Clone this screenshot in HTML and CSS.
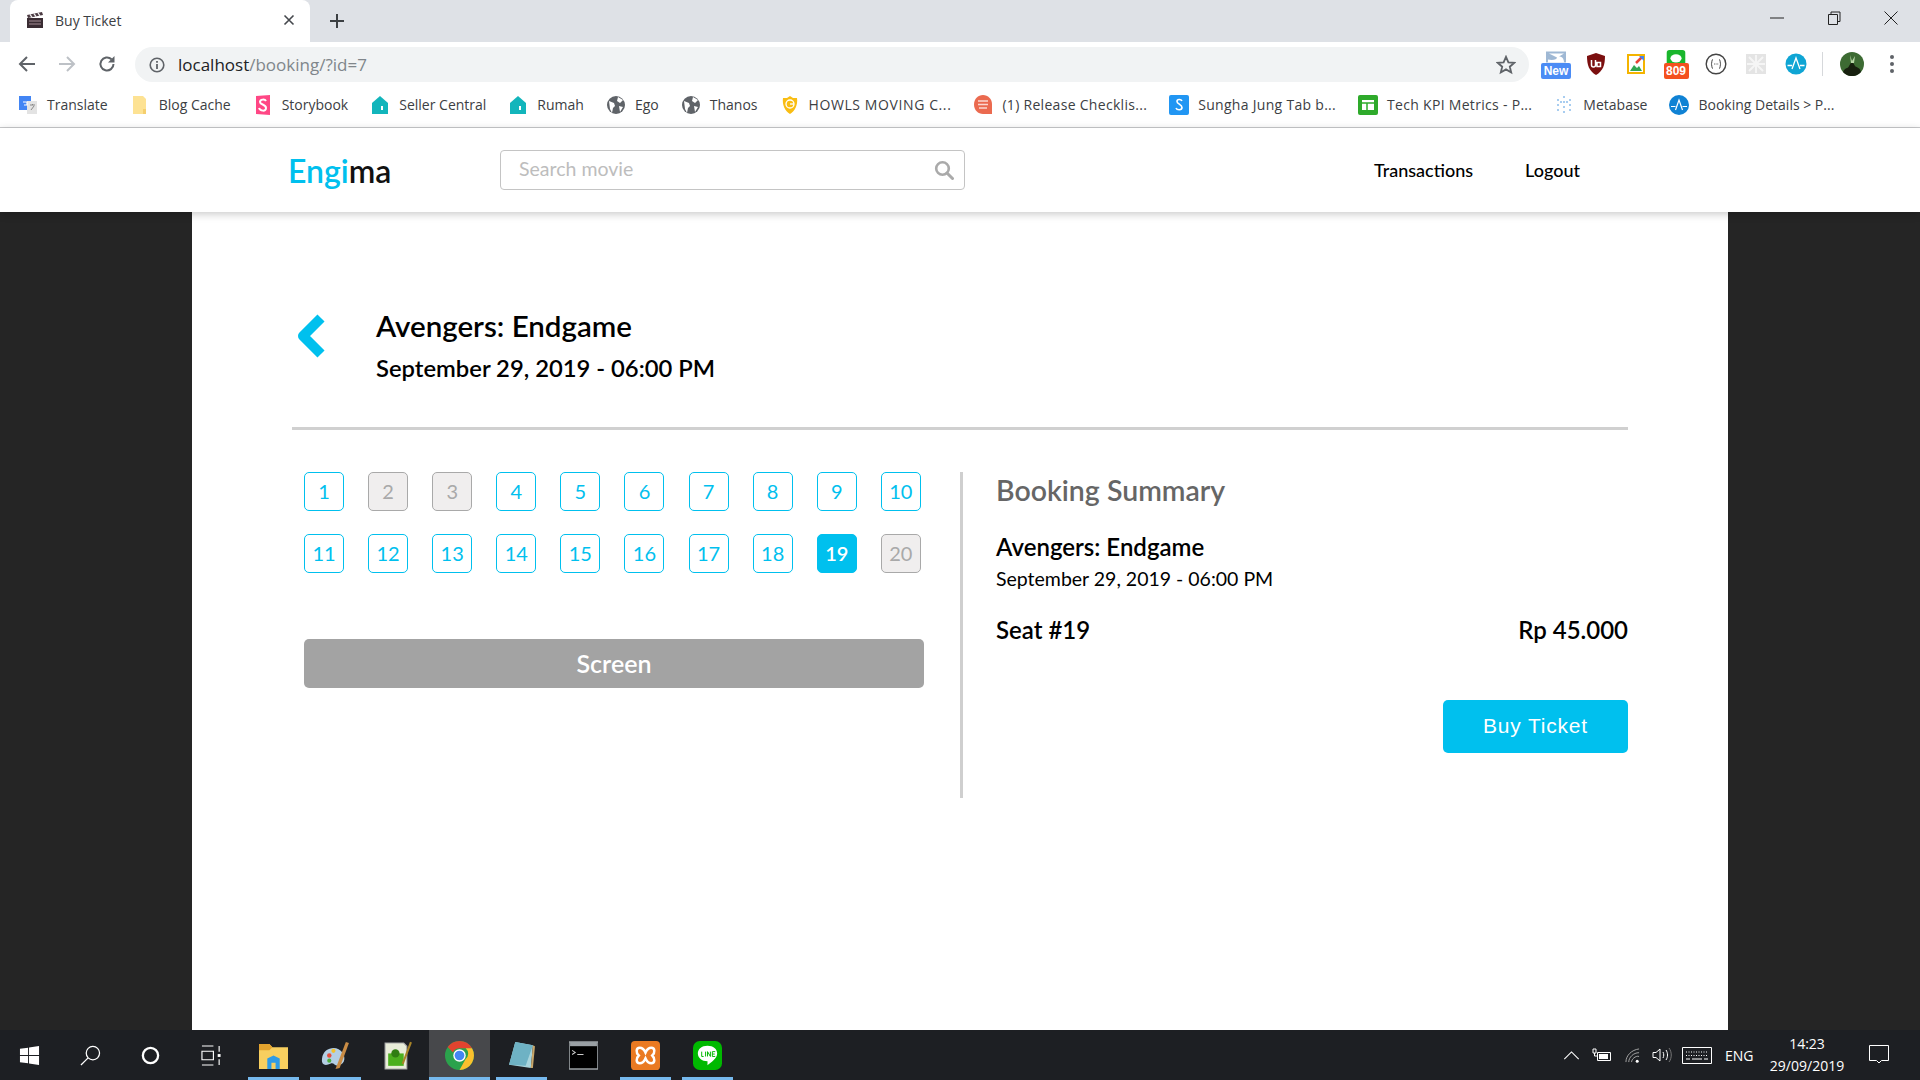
FILE: index.html
```html
<!DOCTYPE html>
<html>
<head>
    <title>Buy Ticket</title>
    <link rel="stylesheet" href="styles.css">
</head>
<body>
    <!-- browser tab strip -->
    <div class="tabstrip">
        <div class="tab">
            <svg class="favicon" viewBox="0 0 18 18"><path d="M1 7h16v10H1z" fill="#3a2c33"/><path d="M1 4l15-3 1 3L2 7z" fill="#4b3a42"/><path d="M4 3.4l2 3M8 2.6l2 3M12 1.8l2 3" stroke="#eee" stroke-width="1.3"/><path d="M3 10h12M3 13h12" stroke="#a58d96" stroke-width="1"/></svg>
            <span class="tab-title">Buy Ticket</span>
            <svg class="tab-close" viewBox="0 0 12 12"><path d="M1.5 1.5l9 9M10.5 1.5l-9 9" stroke="#45484d" stroke-width="1.6"/></svg>
        </div>
        <svg class="new-tab" viewBox="0 0 16 16"><path d="M8 1v14M1 8h14" stroke="#3c4043" stroke-width="2"/></svg>
        <div class="window-btns">
            <svg viewBox="0 0 14 14"><path d="M0 7h14" stroke="#222" stroke-width="1"/></svg>
            <svg viewBox="0 0 14 14"><path d="M1.5 3.5h9v10h-9zM4 3.5V1h9v9.5h-2.500" fill="none" stroke="#222" stroke-width="1"/></svg>
            <svg viewBox="0 0 14 14"><path d="M.5.5l13 13M13.500.5l-13 13" stroke="#222" stroke-width="1"/></svg>
        </div>
    </div>

    <!-- address bar -->
    <div class="toolbar">
        <div class="nav-btns">
            <svg viewBox="0 0 18 18"><path d="M17 9H2M9 2L2 9l7 7" fill="none" stroke="#5f6368" stroke-width="2"/></svg>
            <svg viewBox="0 0 18 18"><path d="M1 9h15M9 2l7 7-7 7" fill="none" stroke="#bdc1c6" stroke-width="2"/></svg>
            <svg viewBox="0 0 18 18"><path d="M15.500 9a6.500 6.500 0 1 1-2-4.700" fill="none" stroke="#5f6368" stroke-width="2"/><path d="M16.500 1v6.500H10z" fill="#5f6368"/></svg>
        </div>
        <div class="omnibox">
            <svg class="info" viewBox="0 0 16 16"><circle cx="8" cy="8" r="6.800" fill="none" stroke="#5f6368" stroke-width="1.600"/><path d="M8 7v5M8 4v1.800" stroke="#5f6368" stroke-width="1.800"/></svg>
            <span class="url">localhost<span class="url-path">/booking/?id=7</span></span>
            <svg class="star" viewBox="0 0 20 20"><path d="M10 1.800l2.400 5.500 6 .5-4.600 3.900 1.400 5.800L10 14.400l-5.200 3.100 1.400-5.800L1.600 7.800l6-.5z" fill="none" stroke="#5f6368" stroke-width="1.800"/></svg>
        </div>
        <div class="extensions">
            <div class="ext ext-new"><svg viewBox="0 0 22 12"><path d="M1 1h20v11H1z" fill="#9fb8d4"/><path d="M4 3h15l-5 3c3 0 5 2 5 6H3V9c5 1 9 0 9-2z" fill="#fff"/></svg><span class="ext-tag tag-new">New</span></div>
            <div class="ext"><svg viewBox="0 0 20 24" width="20" height="24"><path d="M10 1l9 3c0 9-2 15-9 19C3 19 1 13 1 4z" fill="#7b0f0f"/><path d="M5.500 8v5a2 2 0 0 0 4 0V8M11 10.500h3.500v4H11z" fill="none" stroke="#fff" stroke-width="1.500"/></svg></div>
            <div class="ext"><svg viewBox="0 0 18 20" width="18" height="20"><path d="M1 1h16v18H1z" fill="#fff" stroke="#f4b400" stroke-width="2"/><path d="M3 17l4-6 3 3 2-2 3 5z" fill="#34a853"/><path d="M9 9l6-6" stroke="#ea4335" stroke-width="2.500"/><path d="M12 2h5v5" fill="#4285f4"/></svg></div>
            <div class="ext ext-line"><svg viewBox="0 0 20 14"><path d="M3 0h14a3 3 0 0 1 3 3v11H0V3a3 3 0 0 1 3-3z" fill="#19b62c"/><ellipse cx="10" cy="9" rx="6" ry="4.500" fill="#fff"/></svg><span class="ext-tag tag-line">809</span></div>
            <div class="ext"><svg viewBox="0 0 22 22" width="22" height="22"><circle cx="11" cy="11" r="9.800" fill="#fff" stroke="#444" stroke-width="1.400"/><path d="M8 6.500c-2 0-.5 4.500-2 4.500 1.500 0 0 4.500 2 4.500M14 6.500c2 0 .5 4.500 2 4.500-1.500 0 0 4.500-2 4.500" fill="none" stroke="#444" stroke-width="1"/><path d="M9 11h.8M10.700 11h.8M12.400 11h.8" stroke="#444" stroke-width="1"/></svg></div>
            <div class="ext"><svg viewBox="0 0 20 20" width="20" height="20"><path d="M0 0h20v20H0z" fill="#e4e4e4"/><path d="M3 3l14 14M17 3L3 17M10 1v18M1 10h18" stroke="#f5f5f5" stroke-width="2"/></svg></div>
            <div class="ext"><svg viewBox="0 0 22 22" width="22" height="22"><circle cx="11" cy="11" r="10.500" fill="#0fa5d4"/><path d="M2.500 12.500H7M7 16l4-11 4 11M15 12.500h4.500" fill="none" stroke="#fff" stroke-width="1.300"/></svg></div>
            <span class="ext-sep"></span>
            <div class="ext ext-avatar"><svg viewBox="0 0 24 24" width="24" height="24"><circle cx="12" cy="12" r="12" fill="#3d6b33"/><path d="M3 20c2-5 5-3 6-6l3-5 3 5c2 2 5 1 6 6a12 12 0 0 1-18 0z" fill="#17200f"/><path d="M10 3l2 6 3-5-1 7h-3z" fill="#b9d7a8"/></svg></div>
            <div class="ext ext-menu"><span></span><span></span><span></span></div>
        </div>
    </div>

    <!-- bookmarks -->
    <div class="bookmarks">
        <div class="bm"><svg viewBox="0 0 20 20"><path d="M1 1h12v14H1z" fill="#4285f4"/><path d="M9 6h10v13H9z" fill="#e3e3e3"/><path d="M5 7h4v3H6" fill="none" stroke="#fff" stroke-width="1.200"/><path d="M12 10h5M14.500 9v1M13 15l3-4" stroke="#888" stroke-width="1"/></svg>Translate</div>
        <div class="bm"><svg viewBox="0 0 20 20"><path d="M3 1h10l3 3v15H3z" fill="#fde293"/><path d="M13 14h3v5h-3z" fill="#f5cf6e"/></svg>Blog Cache</div>
        <div class="bm"><svg viewBox="0 0 20 20"><path d="M3 1l14-1v20L3 19z" fill="#ff4785"/><path d="M13 6c-1-2-6-2-6 1s6 2 6 6-6 3-7 0" fill="none" stroke="#fff" stroke-width="2"/></svg>Storybook</div>
        <div class="bm"><svg viewBox="0 0 20 20"><path d="M10 1l8 7v11H2V8z" fill="#12b5bb"/><path d="M11 11h2v4h-2z" fill="#fff"/></svg>Seller Central</div>
        <div class="bm"><svg viewBox="0 0 20 20"><path d="M10 1l8 7v11H2V8z" fill="#12b5bb"/><path d="M11 11h2v4h-2z" fill="#fff"/></svg>Rumah</div>
        <div class="bm"><svg viewBox="0 0 20 20"><use href="#globe"/></svg>Ego</div>
        <div class="bm"><svg viewBox="0 0 20 20"><use href="#globe"/></svg>Thanos</div>
        <div class="bm bm-caps"><svg viewBox="0 0 20 20"><path d="M10 1l3 2h4c1 7-2 13-7 16C5 16 2 10 3 3h4z" fill="#f9bd13"/><circle cx="10" cy="9" r="4" fill="none" stroke="#fff" stroke-width="1.300"/><path d="M10 9h4" stroke="#fff" stroke-width="1.300"/></svg>HOWLS MOVING C...</div>
        <div class="bm bm-wide"><svg viewBox="0 0 20 20"><path d="M10 0c5 0 9 4 9 9v10H10c-5 0-9-4-9-9.500S5 0 10 0z" fill="#eb6a4f"/><path d="M5 6h10M5 9.500h10M6 13h8" stroke="#fbd9d1" stroke-width="1.500"/></svg>(1) Release Checklis...</div>
        <div class="bm bm-wide"><svg viewBox="0 0 20 20"><path d="M2 0h16a2 2 0 0 1 2 2v16a2 2 0 0 1-2 2H2a2 2 0 0 1-2-2V2a2 2 0 0 1 2-2z" fill="#2196f3"/><path d="M13 6c-1-2-5-2-5 .5s5 3 5 6-5 3-6 .5" fill="none" stroke="#fff" stroke-width="1.600"/></svg>Sungha Jung Tab b...</div>
        <div class="bm bm-wide"><svg viewBox="0 0 20 20"><path d="M2 0h16a2 2 0 0 1 2 2v16a2 2 0 0 1-2 2H2a2 2 0 0 1-2-2V2a2 2 0 0 1 2-2z" fill="#2eaa2b"/><path d="M4 5h12v10H4z" fill="#fff"/><path d="M4 8h12M9 8v7" stroke="#2eaa2b" stroke-width="1.500"/></svg>Tech KPI Metrics - P...</div>
        <div class="bm"><svg viewBox="0 0 20 20"><path d="M3 4h2v2H3zM3 9h2v2H3zM3 14h2v2H3zM9 1h2v2H9zM9 6h2v2H9zM9 11h2v2H9zM9 16h2v2H9zM15 4h2v2h-2zM15 9h2v2h-2zM15 14h2v2h-2zM6 6h2v2H6zM12 6h2v2h-2z" fill="#a8cdf0"/></svg>Metabase</div>
        <div class="bm"><svg viewBox="0 0 20 20"><circle cx="10" cy="10" r="10" fill="#0f82d4"/><path d="M2 11.500h4.500M6.500 15L10 5l3.500 10M13.500 11.500H18" fill="none" stroke="#fff" stroke-width="1.200"/></svg>Booking Details &gt; P...</div>
    </div>

    <svg class="defs"><defs><g id="globe"><circle cx="10" cy="10" r="9" fill="#5f6368"/><path d="M3 6l5 2 1 3-2 2-1 5-2-4zM12 2l5 3-3 3-3-2zM13 11l4 1-3 5z" fill="#fff"/></g></defs></svg>

    <!-- site header -->
    <header class="topnav">
        <div class="logo"><span class="logo-accent">Engi</span>ma</div>
        <div class="search">
            <span class="search-text">Search movie</span>
            <svg class="search-icon" viewBox="0 0 20 20"><circle cx="8.500" cy="8.500" r="6.300" fill="none" stroke="#aaa" stroke-width="2.600"/><path d="M13 13l5.500 5.500" stroke="#aaa" stroke-width="3" stroke-linecap="round"/></svg>
        </div>
        <nav class="menu">
            <a>Transactions</a>
            <a>Logout</a>
        </nav>
    </header>

    <main class="page">
        <div class="sheet">
            <div class="movie-head">
                <svg class="back" viewBox="0 0 30 46"><path d="M25 5L7 23l18 18" fill="none" stroke="#00c0ee" stroke-width="10" stroke-linejoin="round"/></svg>
                <div>
                    <h1 class="movie-title">Avengers: Endgame</h1>
                    <div class="movie-time">September 29, 2019 - 06:00 PM</div>
                </div>
            </div>

            <div class="booking">
                <div class="seat-col">
                    <div class="seats">
                        <div class="seat">1</div>
                        <div class="seat taken">2</div>
                        <div class="seat taken">3</div>
                        <div class="seat">4</div>
                        <div class="seat">5</div>
                        <div class="seat">6</div>
                        <div class="seat">7</div>
                        <div class="seat">8</div>
                        <div class="seat">9</div>
                        <div class="seat">10</div>
                        <div class="seat">11</div>
                        <div class="seat">12</div>
                        <div class="seat">13</div>
                        <div class="seat">14</div>
                        <div class="seat">15</div>
                        <div class="seat">16</div>
                        <div class="seat">17</div>
                        <div class="seat">18</div>
                        <div class="seat selected">19</div>
                        <div class="seat taken">20</div>
                    </div>
                    <div class="screen">Screen</div>
                </div>

                <div class="summary">
                    <h2 class="summary-title">Booking Summary</h2>
                    <div class="summary-movie">Avengers: Endgame</div>
                    <div class="summary-time">September 29, 2019 - 06:00 PM</div>
                    <div class="summary-row">
                        <span>Seat #19</span>
                        <span>Rp 45.000</span>
                    </div>
                    <button class="buy-btn">Buy Ticket</button>
                </div>
            </div>
        </div>
    </main>

    <!-- windows taskbar -->
    <footer class="taskbar">
        <div class="sys-btns">
            <svg viewBox="0 0 22 22"><path d="M1 4l8.500-1.200v7.700H1zM10.500 2.600L21 1v9.500H10.500zM1 11.500h8.500v7.700L1 18zM10.500 11.500H21V21l-10.500-1.500z" fill="#fff"/></svg>
            <svg viewBox="0 0 22 22"><circle cx="13.500" cy="8.500" r="7" fill="none" stroke="#fff" stroke-width="1.300"/><path d="M8.500 13.500L1 21" stroke="#fff" stroke-width="1.300"/></svg>
            <svg viewBox="0 0 22 22"><circle cx="11" cy="11" r="8" fill="none" stroke="#fff" stroke-width="2.400"/></svg>
            <svg viewBox="0 0 22 22"><path d="M1 1h12M1 21h12M1 6.500h12v9H1zM19 1v6M19 15v6" fill="none" stroke="#fff" stroke-width="1.200"/><path d="M17.500 9.500h3v3h-3z" fill="#fff"/></svg>
        </div>
        <div class="apps">
            <div class="app running"><svg viewBox="0 0 28 28"><path d="M0 3h10l3 3h15v21H0z" fill="#f8cf5f"/><path d="M0 3h10l3 3-3 3H0z" fill="#e3a32e"/><path d="M8 27V17l6-3 6 3v10h-4v-6h-4v6z" fill="#2f9be6"/></svg></div>
            <div class="app running"><svg viewBox="0 0 28 28"><path d="M1 17C2 8 11 5 17 8s8 12 2 15-6-3-10-1-9 2-8-5z" fill="#b4cfe4"/><circle cx="8" cy="14" r="2.200" fill="#e54d3c"/><circle cx="12" cy="9.500" r="2" fill="#f3c02e"/><circle cx="8" cy="19" r="2" fill="#4dae3e"/><path d="M14 27L24 1l3 1-9 24z" fill="#c98c45"/></svg></div>
            <div class="app"><svg viewBox="0 0 28 28"><path d="M2 2h18l3 3v22H2z" fill="#e9edd9" stroke="#aaa"/><path d="M5 12h15v12H5z" fill="#4caf1e"/><circle cx="12" cy="12" r="4" fill="#2f7d12"/><path d="M19 22L27 1" stroke="#a88428" stroke-width="2"/></svg></div>
            <div class="app running active"><svg viewBox="0 0 28 28"><circle cx="14" cy="14" r="14" fill="#2ba24c"/><path d="M14 0a14 14 0 0 1 12.100 7H14a7 7 0 0 0-6.300 4L2.600 5.800A14 14 0 0 1 14 0z" fill="#e2432f"/><path d="M26.100 7A14 14 0 0 1 14 28l5.800-10.300A7 7 0 0 0 20 7z" fill="#fbc02d"/><circle cx="14" cy="14" r="6" fill="#fff"/><circle cx="14" cy="14" r="4.700" fill="#4486f4"/></svg></div>
            <div class="app running"><svg viewBox="0 0 28 28"><path d="M8 1l17 3-2 22-21-3z" fill="#a8d4dc"/><path d="M8 1l17 3-7 20-16-1z" fill="#6eb2c4"/><path d="M23 26l2-22 2 1-2 21z" fill="#c9a76a"/></svg></div>
            <div class="app"><svg viewBox="0 0 28 28"><path d="M0 1h28v26H0z" fill="#000" stroke="#9aa0a4" stroke-width="1.600"/><path d="M1 1h26v4H1z" fill="#9aa0a4"/><path d="M3 9l3 2-3 2M8 13h6" fill="none" stroke="#ccc"/></svg></div>
            <div class="app running"><svg viewBox="0 0 30 30"><rect width="30" height="30" rx="4" fill="#ea7a22"/><path d="M9 7c4 0 5 3 6 5 1-2 2-5 6-5 4 0 4 5 1 8 3 3 3 8-1 8-4 0-5-3-6-5-1 2-2 5-6 5-4 0-4-5-1-8-3-3-3-8 1-8z" fill="none" stroke="#fff" stroke-width="2.600"/></svg></div>
            <div class="app running"><svg viewBox="0 0 30 30"><rect width="30" height="30" rx="7" fill="#00b900"/><path d="M15 5c6 0 10 3.500 10 8 0 5-6 9-10 12v-4C9 21 5 17.500 5 13c0-4.500 4-8 10-8z" fill="#fff"/><path d="M9 11v5h2M13 11v5M15 16v-5l3 5v-5M23 11h-3v5h3M20 13.500h2.500" fill="none" stroke="#00b900" stroke-width="1"/></svg></div>
        </div>
        <div class="tray">
            <svg class="tray-up" viewBox="0 0 18 10"><path d="M1 9l8-8 8 8" fill="none" stroke="#fff" stroke-width="1.200"/></svg>
            <svg class="tray-batt" viewBox="0 0 20 14"><path d="M5.500 4.500h13v8h-13z" fill="none" stroke="#fff"/><path d="M7 6h9v5H7z" fill="#fff"/><path d="M1 1v4h3V1zM2.500 5v3H5.500" fill="none" stroke="#fff"/></svg>
            <svg class="tray-wifi" viewBox="0 0 16 16"><path d="M1 15C1 8 7 2 15 1M4 15c0-5 5-10 11-10M7 15c0-3 4-7 8-6" fill="none" stroke="#aaa" stroke-width="1"/><circle cx="13" cy="14" r="1.600" fill="#fff"/></svg>
            <svg class="tray-vol" viewBox="0 0 20 16"><path d="M1 5.500h3L8 2v12l-4-3.500H1z" fill="none" stroke="#fff"/><path d="M11 5c1 2 1 4 0 6M14 3c2 3 2 7 0 10" fill="none" stroke="#fff"/><path d="M17 1c3 4 3 10 0 14" fill="none" stroke="#777"/></svg>
            <svg class="tray-kbd" viewBox="0 0 30 17"><path d="M.5.500h29v16H.5z" fill="none" stroke="#fff"/><path d="M4 5h22M4 8.500h22" stroke="#fff" stroke-dasharray="1 1.500"/><path d="M4 12h4M10 12h10M22 12h4" stroke="#fff"/></svg>
            <span class="tray-lang">ENG</span>
            <div class="clock">
                <div>14:23</div>
                <div>29/09/2019</div>
            </div>
            <svg class="tray-note" viewBox="0 0 20 20"><path d="M.5.500h19v15h-7l-2.500 2.500-2.500-2.500h-7z" fill="none" stroke="#fff"/></svg>
        </div>
    </footer>
</body>
</html>
```

FILE: styles.css
```css
* {
    box-sizing: border-box;
}
html, body {
    height: 100%;
}
body {
    margin: 0;
    height: 1080px;
    overflow: hidden;
    display: flex;
    flex-direction: column;
    background: #fff;
    font-family: 'Lato', 'Noto Sans', sans-serif;
    color: #000;
}
.defs {
    display: none;
}

/* browser chrome */
.tabstrip {
    height: 42px;
    background: #dee1e6;
    display: flex;
    align-items: center;
    flex-shrink: 0;
}
.tab {
    width: 300px;
    height: 42px;
    margin-left: 10px;
    padding: 0 15px 2px 16px;
    background: #fff;
    border-radius: 8px 8px 0 0;
    display: flex;
    align-items: center;
}
.favicon {
    width: 18px;
    height: 18px;
}
.tab-title {
    margin-left: 11px;
    flex: 1;
    font: 14px 'Open Sans', sans-serif;
    color: #3c4043;
}
.tab-close {
    width: 12px;
    height: 12px;
}
.new-tab {
    width: 16px;
    height: 16px;
    margin-left: 19px;
}
.window-btns {
    margin-left: auto;
    display: flex;
    gap: 43px;
    padding-right: 22px;
    margin-top: -6px;
}
.window-btns svg {
    width: 14px;
    height: 14px;
}
.toolbar {
    height: 44px;
    display: flex;
    align-items: center;
    flex-shrink: 0;
    padding-left: 18px;
    background: #fff;
}
.nav-btns {
    display: flex;
    gap: 22px;
    width: 117px;
}
.nav-btns svg {
    width: 18px;
    height: 18px;
}
.omnibox {
    width: 1394px;
    height: 35px;
    border-radius: 18px;
    background: #f1f3f4;
    display: flex;
    align-items: center;
    padding: 1px 13px 0 14px;
}
.info {
    width: 16px;
    height: 16px;
}
.url {
    margin-left: 13px;
    font: 17px 'Open Sans', sans-serif;
    color: #202124;
}
.url-path {
    color: #80868b;
}
.star {
    margin-left: auto;
    width: 20px;
    height: 20px;
}
.extensions {
    display: flex;
    align-items: center;
    margin-left: 7px;
}
.ext {
    width: 40px;
    height: 30px;
    display: flex;
    flex-direction: column;
    align-items: center;
    justify-content: center;
}
.ext-new svg, .ext-line svg {
    width: 22px;
    height: 13px;
}
.ext-tag {
    width: 30px;
    height: 16px;
    border-radius: 2px;
    font: bold 12px/16px 'Liberation Sans', sans-serif;
    color: #fff;
    text-align: center;
}
.tag-new {
    background: #4b8cf5;
}
.tag-line {
    width: 25px;
    background: #f4511e;
}
.ext-sep {
    width: 1px;
    height: 24px;
    margin: 0 9px 0 6px;
    background: #d6d8db;
}
.ext-avatar {
    width: 40px;
}
.ext-menu {
    gap: 3px;
}
.ext-menu span {
    width: 4px;
    height: 4px;
    border-radius: 50%;
    background: #5f6368;
}
.bookmarks {
    height: 42px;
    display: flex;
    align-items: center;
    gap: 22px;
    flex-shrink: 0;
    padding: 0 0 4px 18px;
    border-bottom: 1px solid #c9cacc;
    font: 14px 'Open Sans', sans-serif;
    color: #3c4043;
    white-space: nowrap;
    background: #fff;
}
.bm {
    display: flex;
    align-items: center;
    gap: 9px;
}
.bm svg {
    width: 20px;
    height: 20px;
}
.bm-caps {
    letter-spacing: 0.600px;
}
.bm-wide {
    letter-spacing: 0.300px;
}

/* site */
.topnav {
    height: 84px;
    flex-shrink: 0;
    position: relative;
    z-index: 2;
    display: flex;
    align-items: center;
    padding-left: 288px;
    background: #fff;
    box-shadow: 0 2px 8px rgba(0,0,0,0.22);
}
.logo {
    width: 212px;
    font-size: 32px;
    font-weight: 600;
    color: #111;
}
.logo-accent {
    color: #00c0ee;
}
.search {
    width: 465px;
    height: 40px;
    border: 1px solid #c4c4c4;
    border-radius: 4px;
    display: flex;
    align-items: center;
    justify-content: space-between;
    padding: 0 10px 2px 18px;
}
.search-text {
    font-size: 19.500px;
    margin-bottom: 2px;
    color: #bdbdbd;
}
.search-icon {
    width: 20px;
    height: 20px;
    margin-top: 2px;
}
.menu {
    margin-left: 409px;
    display: flex;
    gap: 52px;
    font-size: 18px;
    font-weight: 500;
}
.page {
    flex: 1;
    min-height: 0;
    display: flex;
    justify-content: center;
    background: #252525;
}
.sheet {
    width: 1536px;
    padding: 96px 100px 0;
    background: #fff;
}
.movie-head {
    display: flex;
    padding: 0 0 43px 4px;
    border-bottom: 3px solid #d0d0d0;
}
.back {
    width: 30px;
    height: 46px;
    margin: 5px 50px 0 0;
}
.movie-title {
    margin: 0;
    font-size: 29.500px;
    line-height: 36px;
    font-weight: 600;
}
.movie-time {
    margin-top: 8px;
    font-size: 23.800px;
    line-height: 32px;
    font-weight: 600;
}
.booking {
    display: flex;
    margin-top: 42px;
}
.seat-col {
    width: 671px;
    height: 326px;
    padding-left: 12px;
    border-right: 3px solid #cfcfcf;
}
.seats {
    display: grid;
    grid-template-columns: repeat(10, 40px);
    grid-auto-rows: 39px;
    column-gap: 24.100px;
    row-gap: 23px;
}
.seat {
    border: 1px solid #00c0ee;
    border-radius: 5px;
    padding-bottom: 1px;
    display: flex;
    align-items: center;
    justify-content: center;
    font-size: 20px;
    color: #00c0ee;
}
.seat.taken {
    background: #f0eeee;
    border-color: #a9a9a9;
    color: #a9a9a9;
}
.seat.selected {
    background: #00c0ee;
    color: #fff;
    font-weight: 600;
}
.screen {
    width: 620px;
    height: 49px;
    margin-top: 66px;
    border-radius: 5px;
    background: #a3a3a3;
    color: #fff;
    font-size: 25px;
    font-weight: 600;
    line-height: 49px;
    text-align: center;
}
.summary {
    flex: 1;
    padding-left: 33px;
    display: flex;
    flex-direction: column;
}
.summary-title {
    margin: 0;
    font-size: 28.500px;
    line-height: 36px;
    font-weight: 600;
    color: #666;
}
.summary-movie {
    margin-top: 24px;
    font-size: 24px;
    line-height: 30px;
    font-weight: 600;
}
.summary-time {
    margin-top: 5px;
    font-size: 19.500px;
    line-height: 24px;
}
.summary-row {
    margin-top: 24px;
    display: flex;
    justify-content: space-between;
    font-size: 24px;
    line-height: 30px;
    font-weight: 600;
}
.buy-btn {
    align-self: flex-end;
    width: 185px;
    height: 53px;
    margin-top: 55px;
    padding-bottom: 2px;
    border: none;
    border-radius: 5px;
    background: #00c0ee;
    color: #fff;
    font: 21px 'Liberation Sans', sans-serif;
    letter-spacing: 0.800px;
}

/* taskbar */
.taskbar {
    height: 50px;
    flex-shrink: 0;
    display: flex;
    align-items: center;
    background: #1d1f23;
    color: #fff;
    font: 14px 'Open Sans', sans-serif;
}
.sys-btns {
    width: 243px;
    display: flex;
    gap: 39.500px;
    padding-left: 19px;
}
.sys-btns svg {
    width: 21px;
    height: 21px;
}
.apps {
    display: flex;
    height: 50px;
    gap: 1px;
}
.app {
    position: relative;
    width: 61px;
    display: flex;
    align-items: center;
    justify-content: center;
}
.app svg {
    width: 29px;
    height: 29px;
}
.app.running::after {
    content: "";
    position: absolute;
    left: 5px;
    right: 5px;
    bottom: 0;
    height: 3px;
    background: #76b9ed;
}
.app.active {
    background: #47484b;
}
.app.active::after {
    left: 0;
    right: 0;
}
.tray {
    margin-left: auto;
    display: flex;
    align-items: center;
}
.tray-up {
    width: 17px;
    height: 9px;
}
.tray-batt {
    width: 20px;
    height: 14px;
    margin-left: 12px;
}
.tray-wifi {
    width: 15px;
    height: 15px;
    margin-left: 13px;
}
.tray-vol {
    width: 20px;
    height: 16px;
    margin-left: 12px;
}
.tray-kbd {
    width: 30px;
    height: 17px;
    margin-left: 10px;
}
.tray-lang {
    margin-left: 13px;
    width: 30px;
}
.clock {
    width: 104px;
    margin-right: 10px;
    text-align: center;
    line-height: 22px;
}
.tray-note {
    width: 20px;
    height: 20px;
    margin: 0 31px 0 0;
}
```
